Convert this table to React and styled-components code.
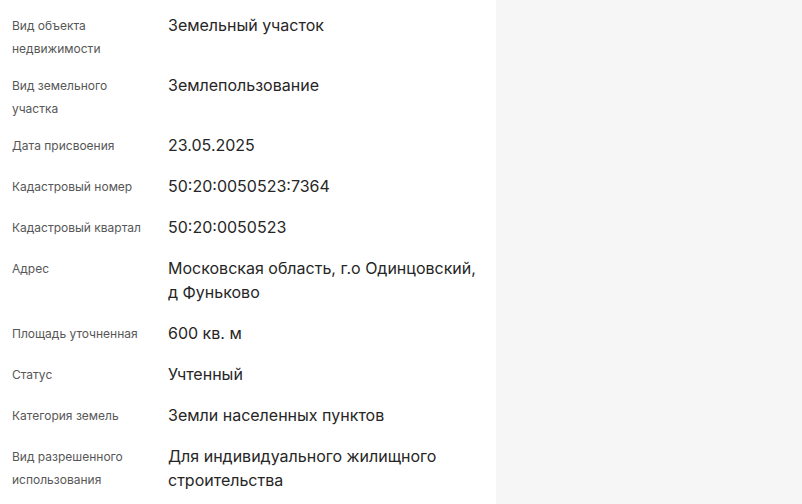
import React from 'react';
import styled, { createGlobalStyle } from 'styled-components';

const GlobalStyle = createGlobalStyle`
  html, body {
    margin: 0;
    padding: 0;
    background: #f6f6f6;
  }
  body {
    font-family: Inter, "Noto Sans", sans-serif;
  }
`;

const fields = [
  ['Вид объекта недвижимости', 'Земельный участок'],
  ['Вид земельного участка', 'Землепользование'],
  ['Дата присвоения', '23.05.2025'],
  ['Кадастровый номер', '50:20:0050523:7364'],
  ['Кадастровый квартал', '50:20:0050523'],
  ['Адрес', 'Московская область, г.о Одинцовский, д Фуньково'],
  ['Площадь уточненная', '600 кв. м'],
  ['Статус', 'Учтенный'],
  ['Категория земель', 'Земли населенных пунктов'],
  ['Вид разрешенного использования', 'Для индивидуального жилищного строительства'],
];

const App = () => {
  return (
    <Page>
      <GlobalStyle />
      <Card>
        <InfoList>
          {fields.map(([label, value]) => (
            <Row key={label}>
              <Label>{label}</Label>
              <Value>{value}</Value>
            </Row>
          ))}
        </InfoList>
      </Card>
      <Side />
    </Page>
  );
};

const Page = styled.div`
  display: flex;
  height: 504px;
  overflow: hidden;
`;

const Card = styled.section`
  width: 496px;
  flex-shrink: 0;
  background: #ffffff;
  box-sizing: border-box;
  padding: 13px 12px 0 12px;
`;

const Side = styled.div`
  flex: 1;
  background: #f6f6f6;
`;

const InfoList = styled.dl`
  margin: 0;
  display: flex;
  flex-direction: column;
  gap: 17px;
`;

const Row = styled.div`
  display: grid;
  grid-template-columns: 136px 1fr;
  column-gap: 20px;
  align-items: start;
`;

/* label lines sit a bit looser than the row rhythm, so let them hang into the gap */
const Label = styled.dt`
  margin: 0 0 -4px 0;
  padding-top: 2px;
  font-size: 12px;
  line-height: 22.5px;
  color: #575757;
`;

const Value = styled.dd`
  margin: 0;
  font-size: 16px;
  line-height: 24px;
  color: #262626;
`;

export default App;
